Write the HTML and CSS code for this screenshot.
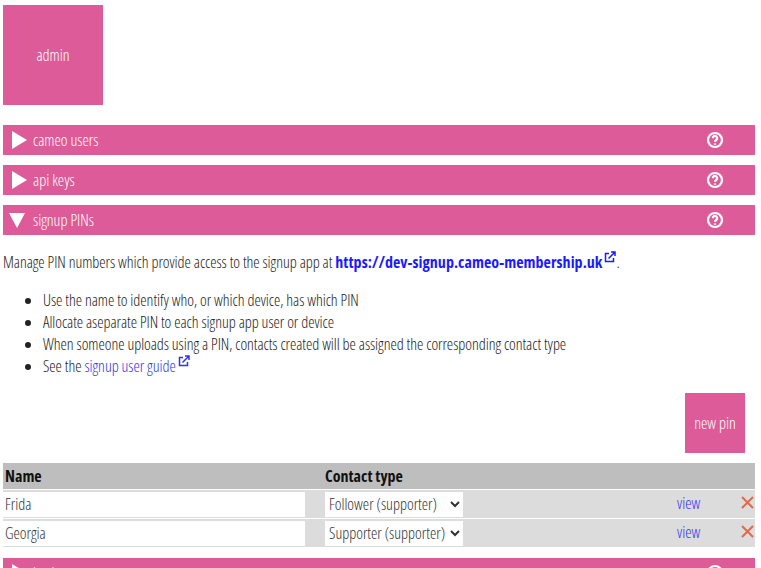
FILE: index.html
```html
<!DOCTYPE html>
<html lang="en">
<head>
  <meta charset="UTF-8" />
  <title>admin</title>
  <link rel="stylesheet" href="styles.css">
</head>
<body>
  <a class="tile" href="#">admin</a>

  <div class="bar"><span class="arrow"></span><span class="bar-title">cameo users</span>
    <svg class="help" viewBox="0 0 18 18"><circle cx="9" cy="9" r="7" /><path d="M6.8 7.2a2.2 2.2 0 1 1 3.4 1.8c-.8.5-1.2 1-1.2 1.8" /><path d="M9 12.4v1.4" /></svg>
  </div>
  <div class="bar"><span class="arrow"></span><span class="bar-title">api keys</span>
    <svg class="help" viewBox="0 0 18 18"><circle cx="9" cy="9" r="7" /><path d="M6.8 7.2a2.2 2.2 0 1 1 3.4 1.8c-.8.5-1.2 1-1.2 1.8" /><path d="M9 12.4v1.4" /></svg>
  </div>
  <div class="bar"><span class="arrow open"></span><span class="bar-title">signup PINs</span>
    <svg class="help" viewBox="0 0 18 18"><circle cx="9" cy="9" r="7" /><path d="M6.8 7.2a2.2 2.2 0 1 1 3.4 1.8c-.8.5-1.2 1-1.2 1.8" /><path d="M9 12.4v1.4" /></svg>
  </div>

  <p class="intro">Manage PIN numbers which provide access to the signup app at <a class="strong-link" href="#">https://dev-signup.cameo-membership.uk<svg class="ext" viewBox="0 0 12 12"><path d="M5 2.5H1.5v8h8V7" /><path d="M4.5 7.5 10.5 1.5M7 1h4v4" /></svg></a>.</p>

  <ul class="notes">
    <li>Use the name to identify who, or which device, has which PIN</li>
    <li>Allocate aseparate PIN to each signup app user or device</li>
    <li>When someone uploads using a PIN, contacts created will be assigned the corresponding contact type</li>
    <li>See the <a href="#">signup user guide<svg class="ext" viewBox="0 0 12 12"><path d="M5 2.5H1.5v8h8V7" /><path d="M4.5 7.5 10.5 1.5M7 1h4v4" /></svg></a></li>
  </ul>

  <div class="actions"><a class="tile small" href="#">new pin</a></div>

  <div class="pins">
    <div class="pin-row head">
      <span>Name</span>
      <span>Contact type</span>
    </div>
    <div class="pin-row">
      <input type="text" value="Frida" />
      <select><option>Follower (supporter)</option></select>
      <a class="row-link" href="#">view</a>
      <svg class="del" viewBox="0 0 14 14"><path d="M1 1l11 11M12 1 1 12" /></svg>
    </div>
    <div class="pin-row">
      <input type="text" value="Georgia" />
      <select><option>Supporter (supporter)</option></select>
      <a class="row-link" href="#">view</a>
      <svg class="del" viewBox="0 0 14 14"><path d="M1 1l11 11M12 1 1 12" /></svg>
    </div>
  </div>

  <div class="bar last"><span class="arrow"></span><span class="bar-title">backups</span>
    <svg class="help" viewBox="0 0 18 18"><circle cx="9" cy="9" r="7" /><path d="M6.8 7.2a2.2 2.2 0 1 1 3.4 1.8c-.8.5-1.2 1-1.2 1.8" /><path d="M9 12.4v1.4" /></svg>
  </div>
</body>
</html>
```

FILE: styles.css
```css
* { box-sizing: border-box; }
html, body { height: 568px; overflow: hidden; }
body {
  margin: 0;
  padding: 5px 6px 0 3px;
  font-family: "Open Sans", sans-serif;
  font-stretch: condensed;
  font-weight: 300;
  font-size: 16px;
  color: #222;
  background: #fff;
}
a {
  color: #3333ee;
  text-decoration: none;
}
.tile {
  display: flex;
  align-items: center;
  justify-content: center;
  width: 100px;
  height: 100px;
  background-color: #dc5b98;
  color: #fff;
}
.tile.small {
  width: 60px;
  height: 60px;
}
.bar {
  display: flex;
  align-items: center;
  height: 30px;
  margin-top: 10px;
  background-color: #dc5b98;
  color: #fff;
}
.tile + .bar { margin-top: 20px; }
.bar.last { margin-top: 11px; }
.arrow {
  width: 15px;
  height: 18px;
  margin: 0 6px 0 9px;
  border-left: 15px solid #fff;
  border-top: 9px solid transparent;
  border-bottom: 9px solid transparent;
}
.arrow.open {
  width: 16px;
  height: 15px;
  margin: 0 8px 0 6px;
  border-top: 15px solid #fff;
  border-left: 8px solid transparent;
  border-right: 8px solid transparent;
  border-bottom: 0;
}
.bar-title { flex: 1; }
.help {
  width: 18px;
  height: 18px;
  margin-right: 31px;
  fill: none;
  stroke: #fff;
  stroke-width: 2.2;
}
.intro {
  margin: 16px 0 0;
  line-height: 22px;
  letter-spacing: -0.04px;
}
.strong-link {
  font-weight: bold;
  color: #1a1aff;
  letter-spacing: 0.05px;
}
.ext {
  width: 12px;
  height: 12px;
  margin-left: 2px;
  vertical-align: 5px;
  fill: none;
  stroke: currentColor;
  stroke-width: 1.5;
}
.notes {
  margin: 16px 0 0;
  padding-left: 40px;
  line-height: 22px;
  letter-spacing: -0.04px;
}
.actions {
  display: flex;
  justify-content: flex-end;
  margin: 16px 10px 0 0;
}
.pins { margin-top: 10px; }
.pin-row {
  display: grid;
  grid-template-columns: 322px 352px 64px 14px;
  align-items: center;
  height: 29px;
  background-color: #dcdcdc;
  border-bottom: 1px solid #fff;
}
.pin-row:last-child { border-bottom: 0; height: 28px; }
.pin-row.head {
  height: 27px;
  background-color: #bebebe;
  font-weight: bold;
  color: #111;
}
.pin-row.head span:first-child { padding-left: 2px; }
.pin-row input {
  width: 302px;
  height: 25px;
  padding: 0 2px;
  border: 0;
  background: #fff;
  font: inherit;
  color: #333;
}
.pin-row select {
  width: 138px;
  height: 25px;
  border: 0;
  background: #fff;
  font: inherit;
  color: #333;
}
.row-link { margin-bottom: 2px; }
.del {
  width: 14px;
  height: 14px;
  margin-bottom: 2px;
  fill: none;
  stroke: #e2694e;
  stroke-width: 2;
}
```
